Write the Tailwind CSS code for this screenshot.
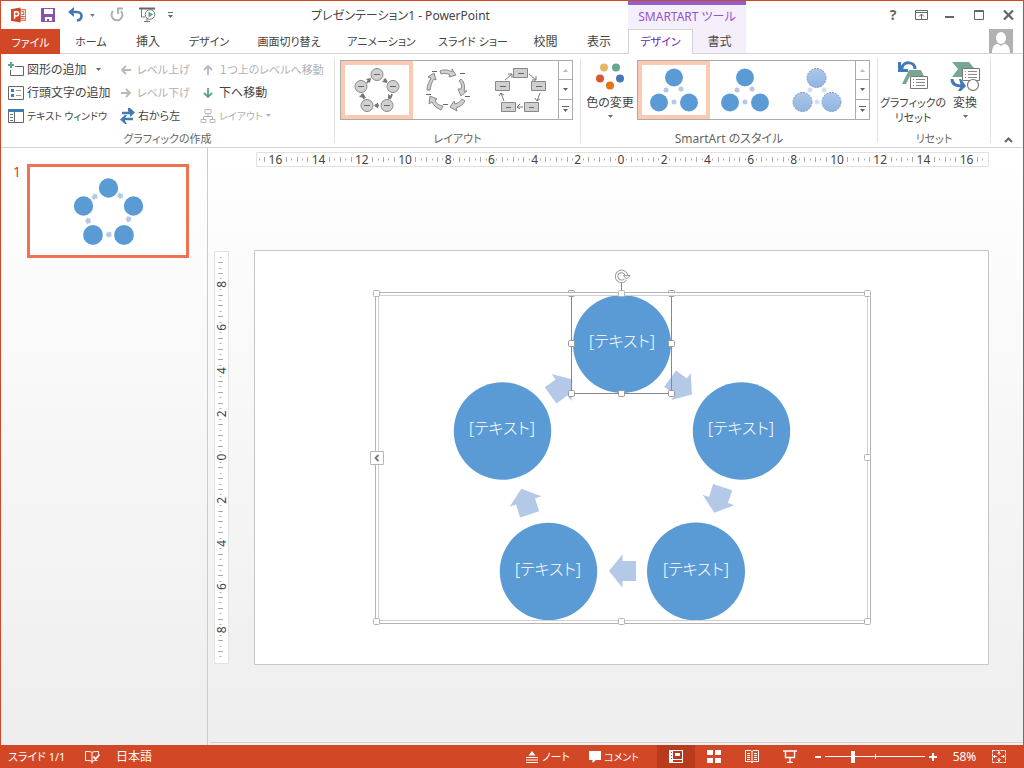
<!DOCTYPE html>
<html lang="ja">
<head>
<meta charset="utf-8">
<title>プレゼンテーション1 - PowerPoint</title>
<script src="https://cdn.jsdelivr.net/npm/@tailwindcss/browser@4"></script>
</head>
<body class="font-['Noto_Sans','Noto_Sans_CJK_JP',sans-serif] [font-feature-settings:'palt'] text-xs leading-4 text-[#444] bg-white">
<div class="min-h-screen flex flex-col">
<div class="flex-1 flex flex-col border border-b-0 border-[#d24726]">

<header>
  <div class="flex h-7">
    <div class="w-[627px] flex">
      <div class="w-[172px] flex items-center pl-2.5">
        <svg class="w-4 h-4" viewBox="0 0 16 16" role="img" aria-label="PowerPoint"><path d="M9.500 2.500h6v11h-6z" fill="#fff" stroke="#d24726"/><path d="M11 4.500h2.500v3H11M10 9.500h4.500M10 11.500h4.500" fill="none" stroke="#d24726"/><path d="M0 2 10 0v16L0 14z" fill="#d24726"/><path d="M3.800 12V4.700h2a2 2 0 0 1 0 4.300h-2" fill="none" stroke="#fff" stroke-width="1.600"/></svg>
        <button class="ml-3.5" aria-label="上書き保存"><svg class="w-4 h-4" viewBox="0 0 16 16"><path d="M1 1h14v14H1z" fill="#8653ad"/><path d="M4 2h9v5H4zM5 10h7v4H9v-2H7v2H5z" fill="#fff"/></svg></button>
        <button class="ml-3" aria-label="元に戻す"><svg class="w-4 h-4" viewBox="0 0 16 16"><path d="M2 5h7c6 0 6 8 0 8.500" fill="none" stroke="#417ab5" stroke-width="2.600"/><path d="M0 5 6 0v3L4.500 5 6 7v3z" fill="#417ab5"/></svg></button>
        <svg class="ml-1.5 w-[5px] h-[3px]" viewBox="0 0 5 3"><path d="M0 0h5L2.500 3z" fill="#777"/></svg>
        <button class="ml-3.5" aria-label="やり直し" disabled><svg class="w-4 h-4" viewBox="0 0 16 16"><path d="M12 4A5.500 5.500 0 1 1 4 4" fill="none" stroke="#b1b1b1" stroke-width="2"/><path d="M8 1.500h6M9 1v6" stroke="#b1b1b1" stroke-width="2"/></svg></button>
        <button class="ml-3.5" aria-label="先頭から開始"><svg class="w-[17px] h-4" viewBox="0 0 17 16"><path d="M0 1.500h16" stroke="#666" stroke-width="2"/><path d="M2.500 2v8H6M8 11v3M5 14.500h6" fill="none" stroke="#777"/><circle cx="11" cy="7.500" r="4.800" fill="#fff" stroke="#777"/><path d="M9.500 4.500 14 7.500l-4.500 3z" fill="#5aa485"/></svg></button>
        <button class="ml-3" aria-label="クイック アクセス ツール バーのユーザー設定"><svg class="w-[5px] h-[6px]" viewBox="0 0 5 6"><path d="M0 0h5v1H0zM0 3h5L2.500 6z" fill="#666"/></svg></button>
      </div>
      <h1 class="flex-1 flex items-center justify-center pt-0.5">プレゼンテーション1 - PowerPoint</h1>
    </div>
    <div class="w-[118px] bg-[#f5effc] border-t-4 border-[#9160cf] text-[#9252cd] flex items-center justify-center whitespace-nowrap">SMARTART ツール</div>
    <div class="flex-1 flex items-center justify-end pr-2 gap-4 text-[#666]">
      <button class="w-3 font-bold text-sm" aria-label="ヘルプ">?</button>
      <button aria-label="リボンの表示オプション"><svg class="w-[13px] h-[10px]" viewBox="0 0 13 10"><path d="M.5.5h12v9H.5zM1 2.500h11M6.500 9V4M4 6.500 6.500 4 9 6.500" fill="none" stroke="#666"/></svg></button>
      <button aria-label="最小化"><svg class="w-[13px] h-[10px]" viewBox="0 0 13 10"><path d="M1 6h9v2H1z" fill="#666"/></svg></button>
      <button aria-label="最大化"><svg class="w-[13px] h-[10px]" viewBox="0 0 13 10"><path d="M1.500.5h9v9h-9zM1 1.500h10" fill="none" stroke="#666"/></svg></button>
      <button aria-label="閉じる"><svg class="w-[13px] h-[10px]" viewBox="0 0 13 10"><path d="m2 .5 9 9m0-9-9 9" fill="none" stroke="#666" stroke-width="2.200"/></svg></button>
    </div>
  </div>

  <nav class="flex h-[25px] whitespace-nowrap">
    <button class="w-[59px] pt-0.5 bg-[#d24726] text-white text-[11px]">ファイル</button>
    <div class="w-[568px] flex border-b border-[#d4d4d4] px-0.5 pt-0.5">
      <button class="w-[58px] text-[11px]">ホーム</button>
      <button class="w-[56px]">挿入</button>
      <button class="w-[66px] text-[11px]">デザイン</button>
      <button class="w-[94px] text-[11px]">画面切り替え</button>
      <button class="w-[91px] text-[11px]">アニメーション</button>
      <button class="w-[92px] text-[11px]">スライド ショー</button>
      <button class="w-[53px]">校閲</button>
      <button class="flex-1">表示</button>
    </div>
    <button class="w-[65px] bg-white border-t border-x border-[#d4d4d4] text-[#6a1fb0] text-[11px]">デザイン</button>
    <button class="w-[53px] pt-0.5 bg-[#f5effc] border-b border-[#d4d4d4]">書式</button>
    <div class="flex-1 border-b border-[#d4d4d4] flex justify-end pr-2.5">
      <svg class="w-6 h-6" viewBox="0 0 24 24" role="img" aria-label="アカウント"><path d="M0 0h24v24H0z" fill="#b1b1b1"/><ellipse cx="12" cy="9" rx="5" ry="6" fill="#fff"/><path d="M3 24c0-7 3-9 6-9l3 2 3-2c3 0 6 2 6 9z" fill="#fff"/></svg>
    </div>
  </nav>

  <div class="flex h-[94px] py-1 border-b border-[#d4d4d4] whitespace-nowrap">
    <section class="w-[334px] border-r border-[#e1e1e1] flex flex-col justify-between">
      <div class="grid grid-cols-[112px_80px_1fr] pl-[7px] text-[11px]">
        <button class="flex items-center h-[23px] gap-[3px] text-xs"><svg class="shrink-0 w-4 h-4" viewBox="0 0 16 16"><path d="M7 4.500h8.500v9h-13V8" fill="none" stroke="#666"/><path d="M3 0v6M0 3h6" stroke="#5aa485" stroke-width="2"/></svg>図形の追加<svg class="ml-1.5 w-[5px] h-[3px]" viewBox="0 0 5 3"><path d="M0 0h5L2.500 3z" fill="#666"/></svg></button>
        <button class="flex items-center gap-[5px] text-[#b1b1b1]" disabled><svg class="shrink-0 w-3 h-3" viewBox="0 0 12 12"><path d="M11 6H3M6 2 2 6l4 4" fill="none" stroke="#b8b8b8" stroke-width="1.800"/></svg>レベル上げ</button>
        <button class="flex items-center gap-[5px] pl-0.5 text-[#b1b1b1]" disabled><svg class="shrink-0 w-3 h-3" viewBox="0 0 12 12"><path d="M6 11V3M2 6l4-4 4 4" fill="none" stroke="#b8b8b8" stroke-width="1.800"/></svg>１つ上のレベルへ移動</button>

        <button class="flex items-center h-[23px] gap-[3px] text-xs"><svg class="shrink-0 w-4 h-4" viewBox="0 0 16 16"><path d="M.5 1.500h15v13H.5z" fill="none" stroke="#666"/><path d="M3 4h3v3H3zM3 9h3v3H3z" fill="#417ab5"/><path d="M8 5.500h5M8 10.500h5" stroke="#999"/></svg>行頭文字の追加</button>
        <button class="flex items-center gap-[5px] text-[#b1b1b1]" disabled><svg class="shrink-0 w-3 h-3" viewBox="0 0 12 12"><path d="M1 6h8M6 2l4 4-4 4" fill="none" stroke="#b8b8b8" stroke-width="1.800"/></svg>レベル下げ</button>
        <button class="flex items-center gap-[5px] pl-0.5 text-xs"><svg class="shrink-0 w-3 h-3" viewBox="0 0 12 12"><path d="M6 1v8M2 6l4 4 4-4" fill="none" stroke="#5aa485" stroke-width="1.800"/></svg>下へ移動</button>

        <button class="flex items-center h-[23px] gap-[3px] text-[10px]"><svg class="shrink-0 w-4 h-4" viewBox="0 0 16 16"><path d="M.5 1.500h15v13H.5zM6.500 3v11" fill="none" stroke="#666"/><path d="M0 1h16v3H0z" fill="#417ab5"/><path d="M2 6.500h3M2 9.500h3M2 12.500h3" stroke="#417ab5"/></svg>テキスト ウィンドウ</button>
        <button class="flex items-center gap-[3px] text-[11px]"><svg class="shrink-0 w-[15px] h-4" viewBox="0 0 15 16"><path d="M2 5h10M13 11H3" stroke="#417ab5" stroke-width="2.400"/><path d="M8 0h2l5 4.500-5 4.500V6.500L8 3zM7 7H5L0 11.500 5 16h2l-2-3v-3z" fill="#417ab5"/></svg>右から左</button>
        <button class="flex items-center gap-[3px] text-[#b1b1b1] text-[10px]" disabled><svg class="shrink-0 w-4 h-4" viewBox="0 0 16 16"><path d="M5 1.500h6v4H5zM1 11.500h5v3H1zM10 11.500h5v3h-5zM8 5.500v3M3.500 11V8.500h9V11" fill="none" stroke="#b8b8b8"/></svg>レイアウト<svg class="w-[5px] h-[3px]" viewBox="0 0 5 3"><path d="M0 0h5L2.500 3z" fill="#b1b1b1"/></svg></button>
      </div>
      <h2 class="-mb-1 text-center text-[#666] text-[11px]">グラフィックの作成</h2>
    </section>

    <section class="w-[246px] border-r border-[#e1e1e1] flex flex-col justify-between">
      <div class="mt-0.5 ml-[5px] w-[233px] h-[60px] border border-[#ababab] flex">
        <button class="w-[72px] border-4 border-[#fbcab2] flex items-center justify-center" aria-label="基本の循環"><svg class="w-[46px] h-11 shrink-0" viewBox="0 0 46 44"><g fill="#d0d0d0" stroke="#888"><circle cx="23" cy="6.500" r="6"/><circle cx="7" cy="18.500" r="6"/><circle cx="39" cy="18.500" r="6"/><circle cx="13" cy="37.500" r="6"/><circle cx="33" cy="37.500" r="6"/></g><path d="M20 6.500h6M4 18.500h6M36 18.500h6M10 37.500h6M30 37.500h6" stroke="#666"/><path d="m17 10-1 5-4-4zM33 15l-5-1 4-4zM34 31v-5l4 3zM5 29l4-4 3 5zM20 37.500l4-3v6z" fill="#777"/><path d="m13 15 3-4m14 0 3 3m5 12-2 5m-26 0-2-5m13 11.500h4" stroke="#777" stroke-width="2"/></svg></button>
        <button class="flex-1" aria-label="テキスト循環"><svg class="w-[46px] h-11 mx-auto" viewBox="0 0 46 44"><g fill="#d0d0d0" stroke="#888"><path d="M15 3c4-2 9-1 12 1V1l4 6-7 2 1-2c-3-2-6-2-9-1z"/><path d="M36 11c4 4 4 8 3 12h3l-6 5-3-7h3c1-3 1-5-2-8z"/><path d="M40 33c-2 4-6 6-9 7l1 3-7-4 4-6 1 3c3-1 5-2 7-5z"/><path d="M16 42c-4-2-7-4-9-8l-3 2 1-8 7 3-2 1c1 3 3 5 8 6z"/><path d="M2 22c0-5 2-8 4-12L3 9l6-4 2 7-2-1c-3 4-3 7-4 11z"/></g><path d="M7 3.500h5M35 5.500h5M40 28.500h5M18 36.500h5M1 26.500h5" stroke="#666"/></svg></button>
        <button class="w-[76px]" aria-label="ボックス循環"><svg class="w-[52px] h-[46px] mx-auto" viewBox="0 0 52 46"><path d="M19.500 1.500h14v9h-14zM1.500 14.500h14v9h-14zM37.500 14.500h14v9h-14zM7.500 35.500h14v9h-14zM30.500 35.500h14v9h-14z" fill="#d0d0d0" stroke="#888"/><path d="M24 6.500h6M6 19.500h6M42 19.500h6M12 40.500h5M35 40.500h5" stroke="#666"/><path d="m11 13 7-6m-4 0h4v4M35 7l7 6v-4m0 4h-4M46 26l-3 8-2-3m2 3 3-2M10 34 7 26l-2 3m2-3 3 2M29 40h-6l3-3m-3 3 3 2" fill="none" stroke="#777"/></svg></button>
        <div class="w-3.5 border-l border-[#ababab] grid grid-rows-3 divide-y divide-[#ababab]">
          <button class="grid place-items-center" aria-label="前の行"><svg class="w-[5px] h-[3px]" viewBox="0 0 5 3"><path d="M0 3h5L2.500 0z" fill="#bbb"/></svg></button>
          <button class="grid place-items-center" aria-label="次の行"><svg class="w-[5px] h-[3px]" viewBox="0 0 5 3"><path d="M0 0h5L2.500 3z" fill="#666"/></svg></button>
          <button class="grid place-items-center" aria-label="その他"><svg class="w-[7px] h-[6px]" viewBox="0 0 7 6"><path d="M0 0h7v1H0zM1 3h5L3.500 6z" fill="#666"/></svg></button>
        </div>
      </div>
      <h2 class="-mb-1 text-center text-[#666] text-[11px]">レイアウト</h2>
    </section>

    <section class="w-[297px] border-r border-[#e1e1e1] flex flex-col justify-between">
      <div class="flex">
        <button class="w-14 pl-0.5 flex flex-col items-center pt-[5px]"><svg class="w-7 h-[27px]" viewBox="0 0 28 27"><circle cx="8" cy="4.500" r="4" fill="#eab565"/><circle cx="20" cy="4.500" r="4" fill="#65a78e"/><circle cx="4" cy="15.500" r="4" fill="#d75735"/><circle cx="24" cy="15.500" r="4" fill="#4479b4"/><circle cx="14" cy="22.500" r="4" fill="#e77310"/></svg><span class="mt-[5px]">色の変更</span><svg class="mt-1 w-[5px] h-[3px]" viewBox="0 0 5 3"><path d="M0 0h5L2.500 3z" fill="#666"/></svg></button>
        <div class="mt-0.5 w-[233px] h-[60px] border border-[#ababab] flex">
          <button class="w-[72px] border-4 border-[#fbcab2] flex items-center justify-center" aria-label="シンプル"><svg class="shrink-0 w-12 h-11" viewBox="0 0 48 44"><g fill="#5b9bd5"><circle cx="24" cy="9.500" r="9"/><circle cx="9" cy="34.500" r="9"/><circle cx="39" cy="34.500" r="9"/></g><g fill="#b4c9e7"><circle cx="16" cy="22" r="2.500"/><circle cx="31" cy="21" r="2.500"/><circle cx="24" cy="34" r="2.500"/></g></svg></button>
          <button class="flex-1" aria-label="白枠"><svg class="w-12 h-11 mx-auto" viewBox="0 0 48 44"><g fill="#5b9bd5"><circle cx="24" cy="9.500" r="9"/><circle cx="9" cy="34.500" r="9"/><circle cx="39" cy="34.500" r="9"/></g><g fill="#b4c9e7"><circle cx="16" cy="22" r="2.500"/><circle cx="31" cy="21" r="2.500"/><circle cx="24" cy="34" r="2.500"/></g></svg></button>
          <button class="w-[76px]" aria-label="光沢"><svg class="w-[50px] h-[46px] mx-auto" viewBox="0 0 50 46"><defs><linearGradient id="soft" x2="0" y2="1"><stop stop-color="#acc7eb"/><stop offset="1" stop-color="#8fb5e1"/></linearGradient></defs><g fill="url(#soft)" stroke="#8298b8" stroke-dasharray="2 1"><circle cx="24.500" cy="11" r="9.500"/><circle cx="10.500" cy="35" r="9.500"/><circle cx="39.500" cy="35" r="9.500"/></g><g fill="#d3e0f3"><circle cx="18" cy="23" r="2.500"/><circle cx="32" cy="23" r="2.500"/><circle cx="25" cy="35" r="2.500"/></g></svg></button>
          <div class="w-3.5 border-l border-[#ababab] grid grid-rows-3 divide-y divide-[#ababab]">
            <button class="grid place-items-center" aria-label="前の行"><svg class="w-[5px] h-[3px]" viewBox="0 0 5 3"><path d="M0 3h5L2.500 0z" fill="#bbb"/></svg></button>
            <button class="grid place-items-center" aria-label="次の行"><svg class="w-[5px] h-[3px]" viewBox="0 0 5 3"><path d="M0 0h5L2.500 3z" fill="#666"/></svg></button>
            <button class="grid place-items-center" aria-label="その他"><svg class="w-[7px] h-[6px]" viewBox="0 0 7 6"><path d="M0 0h7v1H0zM1 3h5L3.500 6z" fill="#666"/></svg></button>
          </div>
        </div>
      </div>
      <h2 class="-mb-1 text-center text-[#666]">SmartArt のスタイル</h2>
    </section>

    <section class="w-[113px] border-r border-[#e1e1e1] flex flex-col justify-between">
      <div class="flex pt-[3px]">
        <button class="w-[70px] flex flex-col items-center"><svg class="w-[30px] h-[30px]" viewBox="0 0 30 30"><path d="M11 9h12l3 6H12l-4 8H4l4-8z" fill="#77a694"/><path d="M12.500 15.500h17v12h-17z" fill="#fff" stroke="#777"/><path d="M15 18.500h1m2 0h9M15 21.500h1m2 0h9M15 24.500h1m2 0h9" stroke="#888"/><path d="M4 7c1-7 13-7 13 1" fill="none" stroke="#417ab5" stroke-width="3"/><path d="M0 1h3v5l3 2h4v3H0z" fill="#417ab5"/></svg><span class="mt-1 leading-[15px] text-[11px]">グラフィックの<br>リセット</span></button>
        <button class="w-[34px] flex flex-col items-center"><svg class="w-[30px] h-[30px]" viewBox="0 0 30 30"><path d="M2 1h17l5 6-3 7h-9v2H2l6-8z" fill="#77a694"/><path d="M12.500 7.500h17v12h-17z" fill="#fff" stroke="#777"/><path d="M15 10.500h1m2 0h9M15 13.500h1m2 0h9M15 16.500h1m2 0h9" stroke="#888"/><circle cx="23" cy="24" r="5.500" fill="#fff" stroke="#777" stroke-width="1.200"/><path d="M2 18c0 5 4 7 10 7" fill="none" stroke="#417ab5" stroke-width="3"/><path d="M9 18h2l5 7-5 5H8l3-5z" fill="#417ab5"/></svg><span class="mt-1 leading-[15px]">変換</span><svg class="mt-[5px] w-[5px] h-[3px]" viewBox="0 0 5 3"><path d="M0 0h5L2.500 3z" fill="#666"/></svg></button>
      </div>
      <h2 class="-mb-1 text-center text-[#666] text-[11px]">リセット</h2>
    </section>
    <div class="flex-1 flex items-end justify-end pr-2.5"><button aria-label="リボンを折りたたむ"><svg class="w-[9px] h-[6px]" viewBox="0 0 9 6"><path d="m1 5 3.500-3.500L8 5" fill="none" stroke="#666" stroke-width="2"/></svg></button></div>
  </div>
</header>

<main class="flex-1 flex bg-linear-to-b from-white to-[#eee]">
  <aside class="w-[207px] border-r border-[#cbcbcb] pt-4 flex items-start">
    <span class="w-[26px] pl-3 text-sm leading-4 text-[#d24726]">1</span>
    <button class="w-[162px] border-3 border-[#f07254] bg-white" aria-label="スライド 1">
      <svg class="w-full h-auto" viewBox="0 0 156 88"><g fill="#5b9bd5"><circle cx="78.500" cy="21" r="9.700"/><circle cx="53.500" cy="39" r="9.700"/><circle cx="103.500" cy="39" r="9.700"/><circle cx="63" cy="68" r="9.900"/><circle cx="94" cy="68" r="9.900"/></g><g fill="#b4c9e7"><use href="#arrow" transform="translate(65 29.500) rotate(-36) scale(.22)"/><use href="#arrow" transform="translate(90.500 29) rotate(36) scale(.22)"/><use href="#arrow" transform="translate(98.500 52.500) rotate(108) scale(.22)"/><use href="#arrow" transform="translate(78.500 67.500) rotate(180) scale(.22)"/><use href="#arrow" transform="translate(58 53.500) rotate(252) scale(.22)"/></g></svg>
    </button>
  </aside>
  <div class="flex-1 flex flex-col pl-0.5">
    <div class="flex-1 pl-1 pt-1 pr-[34px] border-b border-[#d0d0d0]">
      <div class="pl-[42px]"><svg id="hruler" class="w-full h-auto block text-xs" viewBox="256 152 733 15" fill="#444"><path d="M256.500 152.500h732v14h-732z" fill="#fff" stroke="#e1e1e1"/></svg></div>
      <div class="mt-[83px] grid grid-cols-[15px_1fr] gap-x-[25px] items-center">
        <svg id="vruler" class="w-full h-auto block text-xs" viewBox="214 251 15 413" fill="#444"><path d="M214.500 251.500h14v412h-14z" fill="#fff" stroke="#e1e1e1"/></svg>
        <svg class="w-full h-auto block" viewBox="254 250 735 415">
          <defs><path id="arrow" d="M-13.500-10H0v-6.700L13.500 0 0 16.700V10h-13.500z"/><rect id="handle" x="-3" y="-3" width="6" height="6" rx="1" fill="#fff"/></defs>
          <path d="M254.500 250.500h734v414h-734z" fill="#fff" stroke="#c6c6c6"/>
          <g fill="#b4c9e7">
            <use href="#arrow" transform="translate(561.500 387.500) rotate(-36)"/>
            <use href="#arrow" transform="translate(681 386.500) rotate(36)"/>
            <use href="#arrow" transform="translate(718.500 500) rotate(108)"/>
            <use href="#arrow" transform="translate(622.500 571) rotate(180)"/>
            <use href="#arrow" transform="translate(525.500 501.500) rotate(252)"/>
          </g>
          <g fill="#5b9bd5">
            <circle cx="622" cy="344" r="49"/><circle cx="502.500" cy="431" r="48.700"/><circle cx="741.500" cy="431" r="48.700"/><circle cx="548.500" cy="571.500" r="48.700"/><circle cx="696" cy="571.500" r="49"/>
          </g>
          <g class="text-base font-light" fill="#fff" text-anchor="middle">
            <text x="622" y="347">[テキスト]</text><text x="502" y="434">[テキスト]</text><text x="741" y="434">[テキスト]</text><text x="548" y="575">[テキスト]</text><text x="696" y="575">[テキスト]</text>
          </g>
          <path d="M571.500 293v100.500h100V293M621.500 282v10" fill="none" stroke="#888"/>
          <g stroke="#999"><use href="#handle" x="571.500" y="293.500"/><use href="#handle" x="671.500" y="293.500"/></g>
          <path d="M375 292h496v332H375zM379 296v325h488V296z" fill="#fff" fill-rule="evenodd"/>
          <path d="M375.500 292.500h495v331h-495z" fill="none" stroke="#b4b4b4"/>
          <path d="M378.500 295.500h489v325h-489z" fill="none" stroke="#d0d0d0"/>
          <g stroke="#999"><use href="#handle" x="571.500" y="343.500"/><use href="#handle" x="671.500" y="343.500"/><use href="#handle" x="571.500" y="393.500"/><use href="#handle" x="621.500" y="393.500"/><use href="#handle" x="671.500" y="393.500"/></g>
          <g stroke="#b4b4b4"><use href="#handle" x="376.500" y="293.500"/><use href="#handle" x="621.500" y="293.500"/><use href="#handle" x="867.500" y="293.500"/><use href="#handle" x="867.500" y="457.500"/><use href="#handle" x="376.500" y="621.500"/><use href="#handle" x="621.500" y="621.500"/><use href="#handle" x="867.500" y="621.500"/></g>
          <path d="M370.500 451.500h13v13h-13z" fill="#fff" stroke="#b8b8b8"/><path d="m378.500 455-3 3 3 3" fill="none" stroke="#777" stroke-width="1.800"/>
          <path d="M625.500 279.500a5 5 0 1 1 1-4" fill="none" stroke="#999" stroke-width="3.600"/><path d="M625.500 279.500a5 5 0 1 1 1-4" fill="none" stroke="#fff" stroke-width="1.600"/><path d="M623.500 275.500h6.500l-3.500 3.500z" fill="#fff" stroke="#999"/>
        </svg>
      </div>
    </div>
    <div class="h-0.5"></div>
  </div>
</main>
</div>

<footer class="h-[23px] bg-[#d24726] text-white flex items-center whitespace-nowrap pl-2 pr-[18px]">
  <span class="w-[77px] text-[11px]">スライド 1/1</span>
  <button class="w-[31px]" aria-label="スペル チェック"><svg class="w-[15px] h-3.5" viewBox="0 0 15 14"><path d="M7 11.500C6 10.500 4 10.500.5 10.500V1.500c4 0 5.500 0 6.500 1v11M7 2.500c1-1 3-1 6.500-1V4M7 11.500c1-1 3-1 5.500-1" fill="none" stroke="#fff"/><path d="m8.500 6.500 2 2.500 4-4.500" fill="none" stroke="#fff" stroke-width="1.800"/></svg></button>
  <button>日本語</button>
  <div class="ml-auto flex items-center h-full">
    <button class="flex items-center gap-1 w-[63px] text-[11px]"><svg class="w-3 h-3" viewBox="0 0 12 12"><path d="M2.500 4.500 6 0l3.500 4.500zM0 6h12v1H0zM0 8.500h12v1H0zM0 11h12v1H0z" fill="#fff"/></svg>ノート</button>
    <button class="flex items-center gap-0.5 w-[68px] text-[10px]"><svg class="w-[13px] h-3" viewBox="0 0 13 12"><path d="M0 0h12v9H7l-3.500 3V9H0z" fill="#fff"/></svg>コメント</button>
    <button class="w-[38px] h-full bg-[#b83b1d] grid place-items-center" aria-label="標準"><svg class="w-3.5 h-[13px]" viewBox="0 0 14 13"><path d="M0 0h14v13H0zM2 2v1h1V2zM2 5v1h1V5zM2 8v1h1V8zM4 1v8h9V1zM4 10v2h9v-2zM6 3h5v3H6z" fill="#fff" fill-rule="evenodd"/></svg></button>
    <button class="w-[38px] grid place-items-center" aria-label="スライド一覧"><svg class="w-3.5 h-[13px]" viewBox="0 0 14 13"><path d="M0 0h6v5H0zM8 0h6v5H8zM0 8h6v5H0zM8 8h6v5H8z" fill="#fff"/></svg></button>
    <button class="w-[38px] grid place-items-center" aria-label="閲覧表示"><svg class="w-3.5 h-[13px]" viewBox="0 0 14 13"><path d="M.5.5h5L7 1.500l1.500-1h5v11h-5L7 12.500l-1.500-1h-5zM7 1v12M2 3.500h3M2 5.500h3M2 7.500h3M2 9.500h3M9 3.500h3M9 5.500h3M9 7.500h3M9 9.500h3" fill="none" stroke="#fff"/></svg></button>
    <button class="w-[38px] grid place-items-center" aria-label="スライド ショー"><svg class="w-3.5 h-[13px]" viewBox="0 0 14 13"><path d="M0 1h14M2.500 1v6.500h9V1M7 8v4M4 12.500h6" fill="none" stroke="#fff" stroke-width="1.400"/></svg></button>
    <button class="ml-1.5 w-2" aria-label="縮小"><svg class="w-1.5 h-2" viewBox="0 0 6 8"><path d="M0 3h6v2H0z" fill="#fff"/></svg></button>
    <div class="mx-0.5 w-[100px] grid items-center">
      <svg class="col-start-1 row-start-1 w-full h-3" viewBox="0 0 100 12"><path d="M0 5.500h100M50.500 3v5" stroke="#fff"/></svg>
      <input type="range" min="0" max="100" value="27" aria-label="ズーム" class="col-start-1 row-start-1 w-full h-3 appearance-none bg-transparent [&::-webkit-slider-thumb]:appearance-none [&::-webkit-slider-thumb]:w-1 [&::-webkit-slider-thumb]:h-3 [&::-webkit-slider-thumb]:bg-white">
    </div>
    <button class="ml-0.5 w-2" aria-label="拡大"><svg class="w-2 h-2" viewBox="0 0 8 8"><path d="M0 3h8v2H0zM3 0h2v8H3z" fill="#fff"/></svg></button>
    <button class="w-[55px]">58%</button>
    <button aria-label="ウィンドウに合わせる"><svg class="w-3.5 h-[13px]" viewBox="0 0 14 13"><path d="M.5.5h13v12H.5z" fill="none" stroke="#fff" stroke-dasharray="3 1"/><path d="M7 1v4M5.500 3.500 7 2l1.500 1.500M7 12V8M5.500 9.500 7 11l1.500-1.500M1 6.500h4M3 5 1.500 6.500 3 8M13 6.500H9M11 5l1.500 1.500L11 8" fill="none" stroke="#fff"/></svg></button>
  </div>
</footer>
</div>

<script>
// Ruler ticks: one unit is 21.6px, split in four; every second unit is numbered.
const NS = 'http://www.w3.org/2000/svg';
function ruler(id, horizontal, centre, range, max) {
  const svg = document.getElementById(id);
  for (let q = -range; q <= range; q++) {
    const p = centre + q * 5.4;
    const nearest = Math.round(q / 8) * 8;
    if (Math.abs(nearest / 4) <= max && Math.abs(q - nearest) < (horizontal && Math.abs(nearest) >= 40 ? 2 : 1)) {
      if (q !== nearest) continue;
      const t = document.createElementNS(NS, 'text');
      t.textContent = Math.abs(q / 4);
      t.setAttribute('text-anchor', 'middle');
      if (horizontal) { t.setAttribute('x', p); t.setAttribute('y', 164); }
      else t.setAttribute('transform', `translate(226 ${p}) rotate(-90)`);
      svg.append(t);
      continue;
    }
    const tall = q % 2 === 0, half = tall ? 2.5 : 1;
    const l = document.createElementNS(NS, 'path');
    const s = Math.floor(p) + 0.5;
    l.setAttribute('d', horizontal ? `M${s} ${159.5 - half}v${half * 2}` : `M${220.5 - half} ${s}h${half * 2}`);
    l.setAttribute('stroke', '#aaa');
    svg.append(l);
  }
}
ruler('hruler', true, 621, 67, 16);
ruler('vruler', false, 457, 37, 8);
</script>
</body>
</html>
